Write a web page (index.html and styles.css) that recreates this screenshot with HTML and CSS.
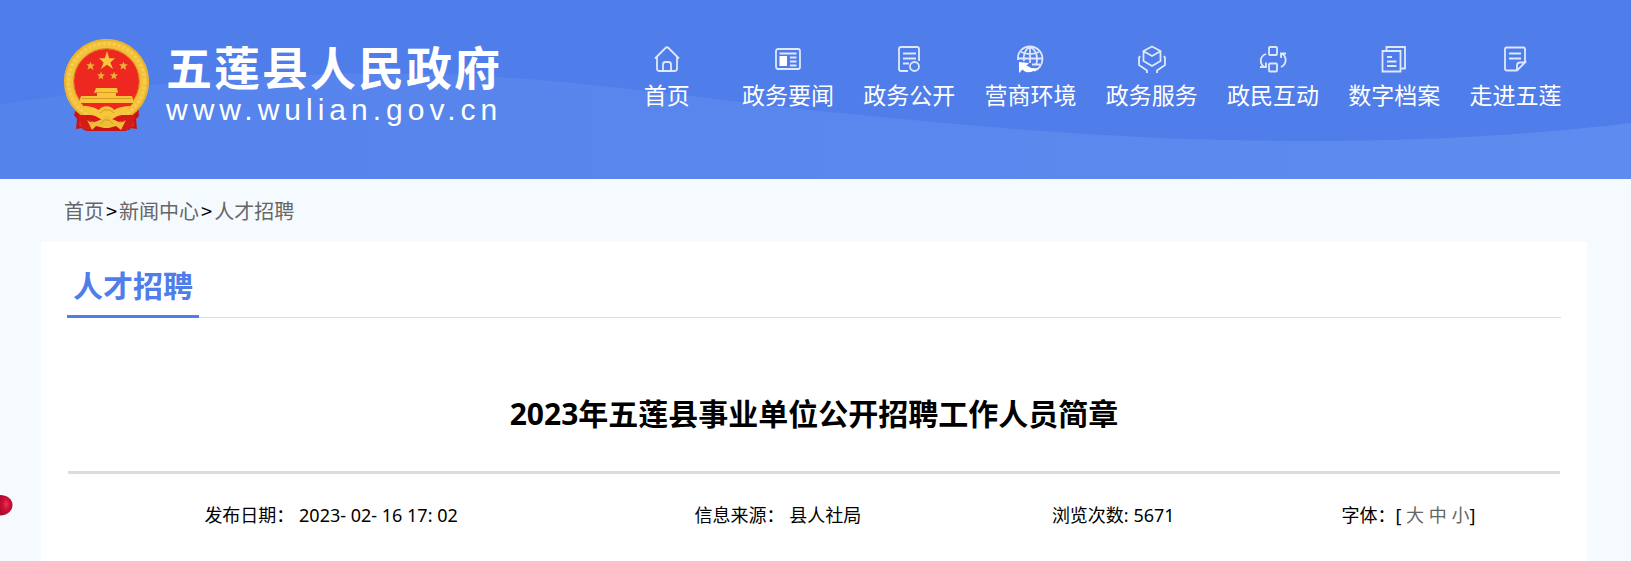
FILE: index.html
```html
<!DOCTYPE html>
<html lang="zh-CN">
<head>
<meta charset="utf-8">
<meta name="viewport" content="width=device-width, initial-scale=1">
<title>2023年五莲县事业单位公开招聘工作人员简章</title>
<link rel="stylesheet" href="styles.css">
</head>
<body>
<header class="header">
  <svg class="wave" viewBox="0 0 1631 179" preserveAspectRatio="none" aria-hidden="true">
    <defs>
      <linearGradient id="waveFill" x1="0" x2="1" y1="0" y2="0">
        <stop offset="0" stop-color="#5583ec"/>
        <stop offset="1" stop-color="#5e8bee"/>
      </linearGradient>
    </defs>
    <path fill="url(#waveFill)" d="M0 105C130 82 300 71 430 74C560 77 680 96 830 112C980 127 1130 141 1300 141C1430 141 1540 134 1631 123V179H0Z"/>
  </svg>
  <a class="brand" href="#">
    <svg class="emblem" viewBox="0 0 85 92" aria-hidden="true">
      <path fill="#c91414" d="M13 66L28 72L42 70L57 72L74 66L75 77L72 80L73 90L66 89L62 92H22L18 89L12 90L13 80L10 76Z"/>
      <path fill="#e32a1c" d="M13 67L25 75L20 89L15 87L16 78ZM72 67L60 75L65 89L70 87L69 78Z"/>
      <circle cx="42.500" cy="42.500" r="37.500" fill="#ee2820" stroke="#f3c03c" stroke-width="10"/>
      <circle cx="42.500" cy="42.500" r="41.500" fill="none" stroke="#e9b02c" stroke-width="1.500"/>
      <circle cx="42.500" cy="42.500" r="38" fill="none" stroke="#f9cd4e" stroke-width="3" stroke-dasharray="3 2"/>
      <circle cx="42.500" cy="42.500" r="33" fill="none" stroke="#d48b1c"/>
      <path fill="#f6c63b" d="M43 12L45.300 19.300H51L46.400 23.400L49 30L43 25.800L37 30L39.600 23.400L35 19.300H40.700Z"/>
      <path fill="#e9b237" d="M26.500 22.500L27.700 25.400L31 25.500L28.500 27.500L29.500 31L26.500 29L23.500 30.500L24.500 27.300L22.500 25L25.500 25.200ZM59.500 22.500L60.700 25.300L64 25.500L61.300 27.600L62 31L59.300 29L56.500 30.500L57.300 27.300L55 25.200L58.400 25.200ZM37 32.500L38 35.200L41 35.400L38.600 37.400L39.300 40.500L37 38.700L34.400 40.300L35.300 37.300L33 35.300L36 35.200ZM50 32.500L51 35.200L54 35.400L51.600 37.400L52.400 40.500L50 38.700L47.400 40.300L48.200 37.300L46 35.300L49 35.200Z"/>
      <path fill="#f7c63d" d="M32 49H53L54 54H52V57H68L70 64H15L17 57H33V54H30Z"/>
      <path stroke="#dc991f" d="M31 53.500H54M18 59.500H67" fill="none"/>
      <path fill="#ee2820" d="M17 64H69L64 70H22Z"/>
      <path fill="#f6c63b" d="M19 67C27 67 31 69 35 71C38 66 47 66 50 71C55 68 60 67 67 67L60 75C54 75 48 80 42.500 83C37 80 31 75 25 75Z"/>
      <path fill="#d51a18" d="M14 76L27 76C33 77 36 80 40 82L34 84L23 81L28 91H19ZM71 76L58 76C52 77 49 80 45 82L51 84L62 81L57 91H66Z"/>
      <path fill="#f0bd38" d="M23 81C29 86 35 81 38 80C40 76 45 76 48 80C52 81 56 86 62 81L57 91L52 87L45 89H40L32 87L28 91Z"/>
      <path stroke="#d39a26" fill="none" d="M36 74L40 71H46L50 74M37 85L40 81H45L49 85"/>
    </svg>
    <span class="brand-text">
      <span class="brand-name">五莲县人民政府</span>
      <span class="brand-url">www.wulian.gov.cn</span>
    </span>
  </a>
  <nav class="nav">
    <a class="nav-item" href="#">
      <svg class="icon" viewBox="0 0 28 28"><path d="M2 13.500L12.500 3Q14 1.500 15.500 3L26 13.500M4 12V23.500Q4 26 6.500 26H21.500Q24 26 24 23.500V12M10 26V19.500Q10 17 12.500 17H15.500Q18 17 18 19.500V26"/></svg>
      <span>首页</span>
    </a>
    <a class="nav-item" href="#">
      <svg class="icon" viewBox="0 0 28 28"><rect x="2" y="4" width="24" height="20" rx="2"/><path d="M5.500 8.500H22.500M16 12.500H22.500M16 16.500H22.500M16 20.500H22.500"/><path class="solid" d="M5.500 11H13V21H5.500Z"/></svg>
      <span>政务要闻</span>
    </a>
    <a class="nav-item" href="#">
      <svg class="icon" viewBox="0 0 28 28"><path d="M24 16V4Q24 2 22 2H6Q4 2 4 4V24Q4 26 6 26H13M8 8.500H21M8 13.500H21M8 18.500H14"/><circle cx="19.500" cy="21.500" r="4.500"/></svg>
      <span>政务公开</span>
    </a>
    <a class="nav-item" href="#">
      <svg class="icon" viewBox="0 0 28 28"><path d="M2 15C1 7 7 1.500 14 1.500C21 1.500 26.500 7 26.500 14C26.500 20 22 25 18 26M14 2V18M2 13.500H26M5 7Q14 11 23 7M8 16C7 10 9 4 14 2C19 4 23 11 20 19.500M16 19.500H24"/><path class="solid" d="M3 17L13 18L10.500 20.500Q15 24 22 23Q17 28 10 27Q8 26 6.500 24.500L3 28Z"/></svg>
      <span>营商环境</span>
    </a>
    <a class="nav-item" href="#">
      <svg class="icon" viewBox="0 0 28 28"><path d="M14 1.500L22.500 6V16L14 21L5.500 16V6ZM6 6.500L14 11L22 6.500M2 11L1 13V20L9 25.500V28M26 11L27 13V20L19 25.500V28"/></svg>
      <span>政务服务</span>
    </a>
    <a class="nav-item" href="#">
      <svg class="icon" viewBox="0 0 28 28"><rect x="10" y="2" width="8" height="8" rx="1"/><rect x="10" y="18.500" width="8" height="8" rx="1"/><path d="M7 9C1 11 0 18 5 22M1 22H7V17.500M22 22C28 19 28 12 23 8.500M27 8.500H22V13"/></svg>
      <span>政民互动</span>
    </a>
    <a class="nav-item" href="#">
      <svg class="icon" viewBox="0 0 28 28"><path d="M6.500 5.500V2H25V23.500H21.500M2.500 6H20.500V26.500H2.500ZM7 12H12M7 16.500H16.500M7 21H16.500"/></svg>
      <span>数字档案</span>
    </a>
    <a class="nav-item" href="#">
      <svg class="icon" viewBox="0 0 28 28"><path d="M24 17V4Q24 2.500 22.500 2.500H5.500Q4 2.500 4 4V24Q4 25.500 5.500 25.500H16L24 17.500H19Q16 17.500 16 20.500V25.500M8 8.500H20M8 13.500H20"/></svg>
      <span>走进五莲</span>
    </a>
  </nav>
</header>

<main class="page">
  <nav class="crumbs">
    <a href="#">首页</a><span class="sep">&gt;</span><a href="#">新闻中心</a><span class="sep">&gt;</span><a href="#">人才招聘</a>
  </nav>
  <article class="card">
    <div class="section-bar"><h2 class="section-title">人才招聘</h2></div>
    <h1 class="title">2023年五莲县事业单位公开招聘工作人员简章</h1>
    <div class="meta">
      <span>发布日期： 2023- 02- 16 17: 02</span>
      <span>信息来源： 县人社局</span>
      <span>浏览次数: 5671</span>
      <span>字体：[ <a href="#">大</a> <a href="#">中</a> <a href="#">小</a>]</span>
    </div>
  </article>
</main>

<svg class="float-ball" viewBox="0 0 13 21" aria-hidden="true">
  <defs>
    <radialGradient id="ballFill" cx="0.500" cy="0.450" r="0.600">
      <stop offset="0" stop-color="#e23a5c"/>
      <stop offset="0.400" stop-color="#d5103a"/>
      <stop offset="1" stop-color="#a80b2c"/>
    </radialGradient>
  </defs>
  <path fill="url(#ballFill)" d="M0 0C7 0 12.500 4 12.500 10C12.500 16 7 20.500 0 20.500Z"/>
</svg>
</body>
</html>
```

FILE: styles.css
```css
* {
  box-sizing: border-box;
}

body {
  margin: 0;
  min-height: 100vh;
  display: flex;
  flex-direction: column;
  background: #f5faff;
  color: #000;
  font-family: "Noto Sans CJK SC", "Noto Sans", sans-serif;
}

a {
  color: inherit;
  text-decoration: none;
}

.header {
  position: relative;
  display: flex;
  justify-content: space-between;
  align-items: flex-start;
  min-height: 179px;
  padding: 39px 55px 0 64px;
  background: #4f7de9;
  color: #fff;
}

.wave {
  position: absolute;
  inset: 0;
  width: 100%;
  height: 100%;
}

.brand {
  position: relative;
  display: flex;
  gap: 17px;
}

.emblem {
  width: 85px;
  height: 92px;
}

.brand-text {
  display: flex;
  flex-direction: column;
  padding-top: 3px;
  font-family: "Liberation Sans", "Noto Sans CJK SC", sans-serif;
  white-space: nowrap;
}

.brand-name {
  font-size: 46px;
  font-weight: 700;
  line-height: 54px;
  letter-spacing: 2px;
}

.brand-url {
  font-size: 30px;
  line-height: 28px;
  letter-spacing: 5px;
}

.nav {
  position: relative;
  display: flex;
  flex: 0 1 970px;
  padding-top: 6px;
}

.nav-item {
  display: flex;
  flex: 1;
  flex-direction: column;
  align-items: center;
  gap: 6px;
  font-size: 23px;
  line-height: 30px;
  white-space: nowrap;
}

.icon {
  width: 28px;
  height: 28px;
  fill: none;
  stroke: #dfe8fc;
  stroke-width: 1.8;
}

.icon .solid {
  fill: #fff;
  stroke: none;
}

.page {
  flex: 1;
  display: flex;
  flex-direction: column;
  padding: 0 44px 0 41px;
}

.crumbs {
  padding: 17px 23px 16px;
  font-size: 20px;
  line-height: 30px;
  color: #666;
}

.sep {
  padding: 0 2px;
  color: #000;
}

.card {
  flex: 1;
  padding: 22px 26px 0;
  background: #fff;
}

.section-bar {
  display: flex;
  border-bottom: 1px solid #ddd;
}

.section-title {
  margin: 0 0 -1px;
  padding: 0 6px 11px;
  border-bottom: 3px solid #4f7de9;
  color: #4f7de9;
  font-size: 30px;
  line-height: 40px;
}

.title {
  margin: 0 1px;
  padding: 74px 0 35px;
  border-bottom: 3px solid #dcdcdc;
  font-family: "Noto Sans", "Noto Sans CJK SC", sans-serif;
  font-size: 30px;
  line-height: 44px;
  text-align: center;
}

.meta {
  display: grid;
  grid-template-columns: 526fr 364fr 304fr 284fr;
  padding: 28px 10px 28px 0;
  font-family: "Noto Sans", "Noto Sans CJK SC", sans-serif;
  font-size: 18px;
  line-height: 26px;
  text-align: center;
}

.meta a {
  color: #666;
}

.float-ball {
  position: fixed;
  left: 0;
  top: 495px;
  width: 13px;
  height: 21px;
}
```
